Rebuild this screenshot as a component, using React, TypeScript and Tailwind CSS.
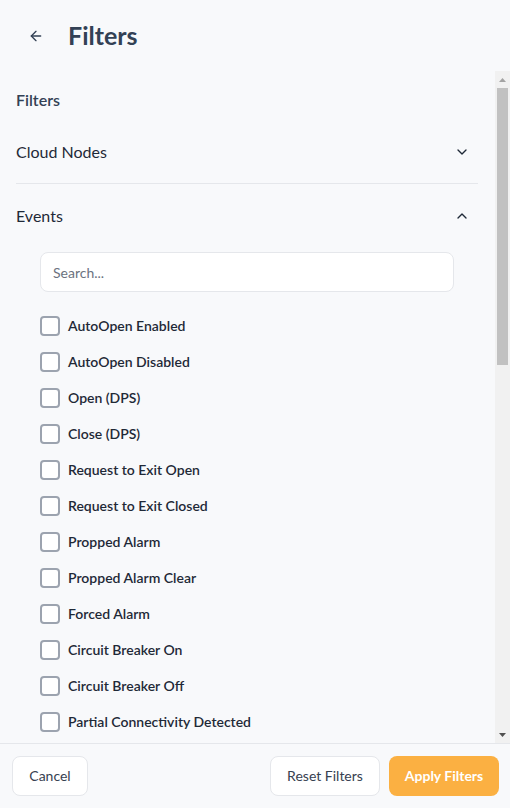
import { ArrowLeft, ChevronDown, ChevronUp } from "lucide-react";

const events = [
  "AutoOpen Enabled",
  "AutoOpen Disabled",
  "Open (DPS)",
  "Close (DPS)",
  "Request to Exit Open",
  "Request to Exit Closed",
  "Propped Alarm",
  "Propped Alarm Clear",
  "Forced Alarm",
  "Circuit Breaker On",
  "Circuit Breaker Off",
  "Partial Connectivity Detected",
];

function Checkbox({ label }: { label: string }) {
  return (
    <label className="flex h-9 items-center gap-2">
      <span className="h-5 w-5 shrink-0 rounded-[4px] border-2 border-[#9ca3af] bg-white" />
      <span className="text-sm font-semibold text-[#1f2937]">{label}</span>
    </label>
  );
}

function Section({ title, open }: { title: string; open?: boolean }) {
  return (
    <button
      type="button"
      className={
        "flex w-full items-center justify-between pr-2 text-left text-base text-[#1f2937] " +
        (open ? "h-16" : "h-[63px] border-b border-[#e5e7eb]")
      }
    >
      <span>{title}</span>
      {open ? (
        <ChevronUp size={16} strokeWidth={2} />
      ) : (
        <ChevronDown size={16} strokeWidth={2} />
      )}
    </button>
  );
}

function Scrollbar() {
  return (
    <div className="flex w-[15px] shrink-0 flex-col bg-[#f1f1f1]">
      <div className="flex h-[17px] items-center justify-center">
        <svg width="7" height="4" viewBox="0 0 7 4">
          <path d="M3.5 0 L7 4 L0 4 Z" fill="#a3a3a3" />
        </svg>
      </div>
      <div className="mx-[2px] h-[277px] bg-[#c1c1c1]" />
      <div className="flex-1" />
      <div className="flex h-[17px] items-center justify-center">
        <svg width="7" height="4" viewBox="0 0 7 4">
          <path d="M0 0 L7 0 L3.5 4 Z" fill="#505050" />
        </svg>
      </div>
    </div>
  );
}

export default function App() {
  return (
    <div
      className="flex h-[808px] w-[510px] flex-col bg-[#f8f9fb]"
      style={{ fontFamily: "Lato, 'Noto Sans', sans-serif" }}
    >
      <header className="flex h-[71px] shrink-0 items-center gap-3 px-4">
        <button type="button" className="flex h-10 w-10 items-center justify-center text-[#334155]">
          <ArrowLeft size={16} strokeWidth={2} />
        </button>
        <h1 className="text-[25px] font-bold text-[#334155]">Filters</h1>
      </header>

      <div className="flex min-h-0 flex-1">
        <div className="min-w-0 flex-1 overflow-hidden pl-4 pr-[17px] pt-[17px]">
          <p className="h-6 text-base font-semibold text-[#334155]">Filters</p>
          <div className="mt-[9px]">
            <Section title="Cloud Nodes" />
            <Section title="Events" open />
            <div className="px-6">
              <input
                placeholder="Search..."
                className="mt-1 h-10 w-full rounded-lg border border-[#e5e7eb] bg-white px-3 text-sm text-[#1f2937] outline-none placeholder:text-[#6b7280]"
              />
              <div className="pt-4">
                {events.map((e) => (
                  <Checkbox key={e} label={e} />
                ))}
              </div>
            </div>
          </div>
        </div>
        <Scrollbar />
      </div>

      <footer className="flex shrink-0 items-center border-t border-[#e5e7eb] pb-3 pl-3 pr-[11px] pt-3">
        <button
          type="button"
          className="h-10 w-[76px] rounded-lg border border-[#e5e7eb] bg-white text-sm text-[#374151]"
        >
          Cancel
        </button>
        <div className="ml-auto flex gap-[9px]">
          <button
            type="button"
            className="h-10 w-[110px] rounded-lg border border-[#e5e7eb] bg-white text-sm text-[#374151]"
          >
            Reset Filters
          </button>
          <button
            type="button"
            className="h-10 w-[110px] rounded-lg bg-[#fbb042] text-sm font-bold text-white"
          >
            Apply Filters
          </button>
        </div>
      </footer>
    </div>
  );
}
